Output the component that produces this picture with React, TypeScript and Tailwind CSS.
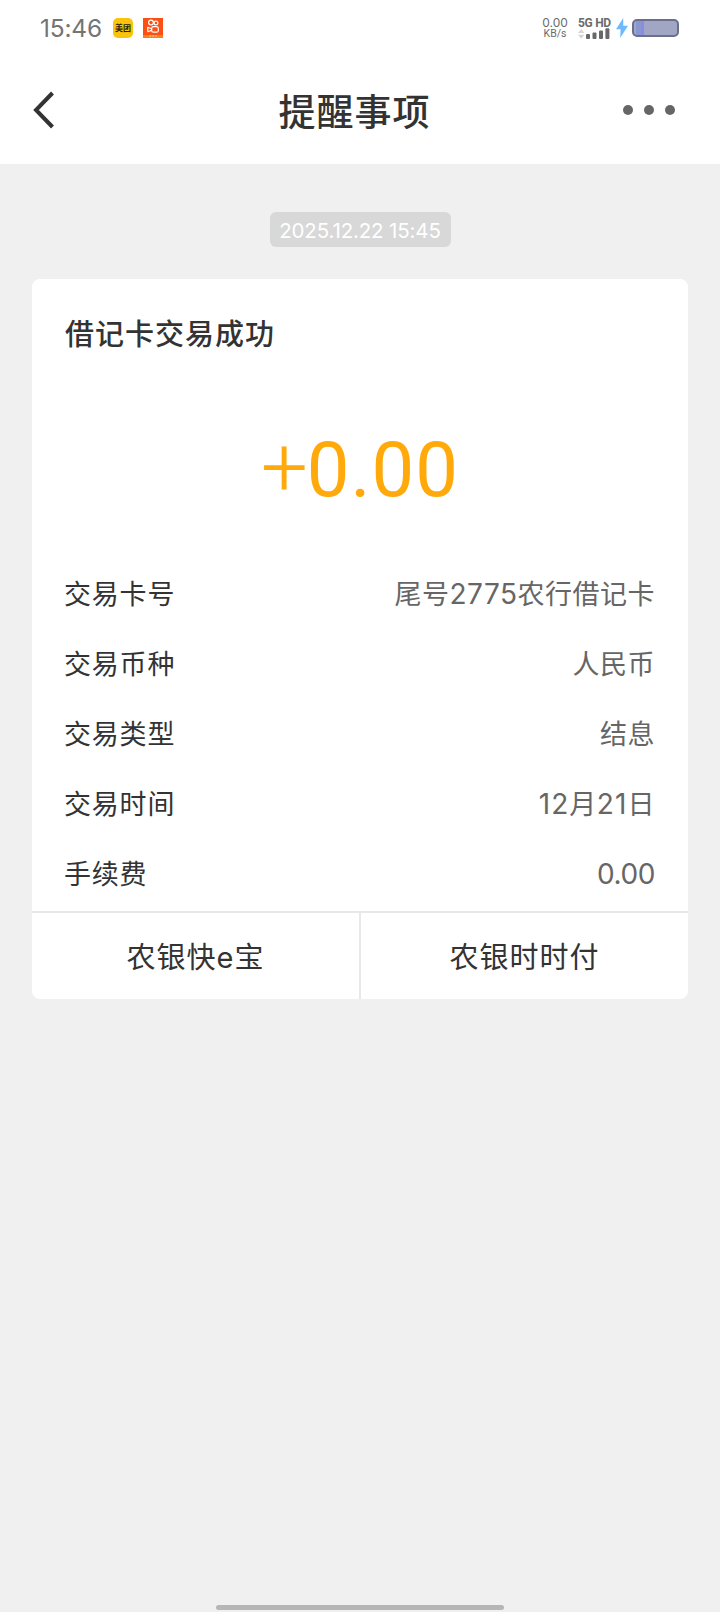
import type { ReactNode } from 'react';

type Detail = {
  label: string;
  value: ReactNode;
};

const Digits = ({ children, spacing = 'tracking-[-0.4px]' }: { children: ReactNode; spacing?: string }) => (
  <span className={`font-[Inter] text-[28px] ${spacing}`}>{children}</span>
);

const details: Detail[] = [
  { label: '交易卡号', value: <>尾号<Digits spacing="tracking-[0.5px]">2775</Digits>农行借记卡</> },
  { label: '交易币种', value: '人民币' },
  { label: '交易类型', value: '结息' },
  {
    label: '交易时间',
    value: (
      <>
        <Digits spacing="tracking-[1.1px]">12</Digits>月<Digits spacing="tracking-[1.1px]">21</Digits>日
      </>
    ),
  },
  { label: '手续费', value: <Digits>0.00</Digits> },
];

function StatusBar() {
  return (
    <div className="flex h-14 items-center justify-between pl-10 pr-[41px] font-[Roboto] text-[#6b6b6b]">
      <div className="flex items-center">
        <span className="w-[73px] font-[Inter] text-[24.5px] leading-[56px] tracking-[-0.2px] text-[#747474]">15:46</span>
        <span className="flex size-5 items-center justify-center overflow-hidden rounded-[5px] bg-[#fbc30c] font-['Noto_Sans_CJK_SC'] text-[8px] leading-none font-bold whitespace-nowrap text-[#2a2100]">
          美团
        </span>
        <svg className="ml-2.5" width="20" height="20" viewBox="0 0 20 20" fill="none">
          <rect width="20" height="20" fill="#fb4f14" />
          <rect y="17" width="20" height="3" fill="#fd7d1c" />
          <g stroke="#fff" strokeWidth="1.2">
            <circle cx="8" cy="4.6" r="2.4" />
            <circle cx="13" cy="5" r="1.9" />
            <rect x="8.7" y="8.6" width="6.6" height="5.6" rx="1.8" />
            <path d="M8.5 10.8 4.8 9.3v4.4l3.7-1.3" strokeLinejoin="round" />
          </g>
          <path d="M6.5 18h1.6M9.4 18H11M12.3 18h1.6" stroke="#ffe3c4" strokeWidth="1.2" />
        </svg>
      </div>
      <div className="flex items-center">
        <div className="mr-px flex w-[26px] flex-col items-center text-center">
          <span className="font-[Inter] text-[12px] leading-[11px] whitespace-nowrap">0.00</span>
          <span className="text-[10.5px] leading-[11px]">KB/s</span>
        </div>
        <div className="mr-px ml-[9px] flex w-[34px] flex-col">
          <span className="font-[Roboto] text-[12px] leading-[10px] font-bold tracking-[-0.3px] whitespace-nowrap">5G HD</span>
          <svg width="34" height="11" viewBox="0 0 34 11">
            <path d="M0 5 3.2 1l3.2 4zM0 6.8h6.4L3.2 10.8z" fill="#d6d6d6" />
            <g fill="#686868">
              <rect x="8" y="6" width="4" height="5" rx="1" />
              <rect x="14.5" y="4.5" width="4" height="6.5" rx="1" />
              <rect x="21" y="2.5" width="4" height="8.5" rx="1" />
              <rect x="27.4" y="0.2" width="4" height="10.8" rx="1" />
            </g>
          </svg>
        </div>
        <svg className="ml-[3px]" width="12" height="20" viewBox="0 0 12 20">
          <path d="M7.2 0 0 11.2h4.6L4.2 20 12 7.8H7.3z" fill="#6fbaff" />
        </svg>
        <div className="ml-1 flex h-[18px] w-[47px] overflow-hidden rounded-[5px] border-2 border-[#6b6f8b] bg-[#a2a6c5] pl-0.5">
          <span className="w-[5px] bg-[#8598cf]" />
          <span className="w-[3px] bg-[#8f87ec]" />
        </div>
      </div>
    </div>
  );
}

function Header() {
  return (
    <header className="flex h-[108px] items-center justify-between pl-[33px] pr-[45px]">
      <svg width="22" height="38" viewBox="0 0 22 38" fill="none">
        <path d="M19.5 2 3 19l16.5 17" stroke="#333" strokeWidth="4" />
      </svg>
      <h1 className="ml-[31px] text-[37px] leading-[108px] font-medium tracking-[1px] text-[#333]">提醒事项</h1>
      <svg width="52" height="10" viewBox="0 0 52 10" fill="#666">
        <circle cx="5" cy="5" r="5" />
        <circle cx="26" cy="5" r="5" />
        <circle cx="47" cy="5" r="5" />
      </svg>
    </header>
  );
}

export default function App() {
  return (
    <div className="flex h-[1612px] w-[720px] flex-col bg-[#f0f0f0] font-['Noto_Sans_CJK_SC',sans-serif] text-[#333]">
      <div className="bg-white">
        <StatusBar />
        <Header />
      </div>

      <div className="mt-12 flex h-[35px] w-[181px] items-center justify-center self-center rounded-md bg-[#d8d8d8] pt-[3px] font-[Inter] text-[20.5px] tracking-[-0.15px] whitespace-nowrap text-white">
        2025.12.22 15:45
      </div>

      <main className="mx-8 mt-8 flex h-[720px] flex-col overflow-hidden rounded-lg bg-white">
        <h2 className="mt-[30px] pl-[33px] text-[29px] leading-[46px] font-medium tracking-[1px]">借记卡交易成功</h2>
        <p className="mt-[63px] h-[102px] text-center font-[Roboto] text-[76px] leading-[100px] tracking-[1px] text-[#ffa90a]">
          <span className="text-[83px] font-light tracking-[-1px]">+</span>0.00
        </p>
        <div className="mt-[38px] flex flex-col">
          {details.map((item) => (
            <div key={item.label} className="flex h-[70px] items-center justify-between pr-[33px] pl-8 text-[27px] leading-[70px] tracking-[0.8px]">
              <span>{item.label}</span>
              <span className="tracking-[0.5px] text-[#666]">{item.value}</span>
            </div>
          ))}
        </div>
        <div className="mt-[3px] flex flex-1 border-t-2 border-[#e8e8e8] text-[29px] leading-[84px] tracking-[1px]">
          <button className="flex-1 border-r-2 border-[#e8e8e8] pb-0.5">
            农银快<span className="font-[Inter]">e</span>宝
          </button>
          <button className="flex-1 pb-[5px]">农银时时付</button>
        </div>
      </main>

      <div className="mt-auto mb-0.5 h-[5px] w-[288px] self-center rounded-full bg-[#b6b6b6]" />
    </div>
  );
}
